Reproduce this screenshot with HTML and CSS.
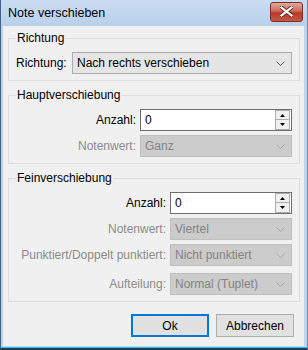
FILE: index.html
```html
<!DOCTYPE html>
<html lang="de">
<head>
    <meta charset="UTF-8">
    <title>Note verschieben</title>
    <link rel="stylesheet" href="styles.css">
</head>
<body>
    <div class="window">
        <div class="titlebar">
            <span class="title">Note verschieben</span>
            <div class="close">
                <svg width="13" height="11" viewBox="0 0 13 11">
                    <path d="M1.5 1.5 L11.5 9.5 M11.5 1.5 L1.5 9.5" stroke="#5a2a24" stroke-width="4" stroke-linecap="square"/>
                    <path d="M1.5 1.5 L11.5 9.5 M11.5 1.5 L1.5 9.5" stroke="#ffffff" stroke-width="2.2" stroke-linecap="square"/>
                </svg>
            </div>
        </div>

        <div class="client">
            <fieldset class="group group-dir">
                <legend>Richtung</legend>
                <div class="row">
                    <label>Richtung:</label>
                    <div class="combo">
                        <span>Nach rechts verschieben</span>
                        <svg class="chevron" width="9" height="5" viewBox="0 0 9 5"><polyline points="0.5,0.5 4.5,4.5 8.5,0.5" fill="none" stroke="#606060"/></svg>
                    </div>
                </div>
            </fieldset>

            <fieldset class="group group-main">
                <legend>Hauptverschiebung</legend>
                <div class="form">
                    <label>Anzahl:</label>
                    <div class="spin">
                        <span>0</span>
                        <div class="spin-buttons">
                            <div class="spin-btn"><svg width="5" height="3" viewBox="0 0 5 3"><polygon points="2.5,0 5,3 0,3" fill="#000"/></svg></div>
                            <div class="spin-btn"><svg width="5" height="3" viewBox="0 0 5 3"><polygon points="0,0 5,0 2.5,3" fill="#000"/></svg></div>
                        </div>
                    </div>

                    <label class="disabled">Notenwert:</label>
                    <div class="combo off">
                        <span>Ganz</span>
                        <svg class="chevron" width="9" height="5" viewBox="0 0 9 5"><polyline points="0.5,0.5 4.5,4.5 8.5,0.5" fill="none" stroke="#a8a8a8"/></svg>
                    </div>
                </div>
            </fieldset>

            <fieldset class="group group-fine">
                <legend>Feinverschiebung</legend>
                <div class="form">
                    <label>Anzahl:</label>
                    <div class="spin">
                        <span>0</span>
                        <div class="spin-buttons">
                            <div class="spin-btn"><svg width="5" height="3" viewBox="0 0 5 3"><polygon points="2.5,0 5,3 0,3" fill="#000"/></svg></div>
                            <div class="spin-btn"><svg width="5" height="3" viewBox="0 0 5 3"><polygon points="0,0 5,0 2.5,3" fill="#000"/></svg></div>
                        </div>
                    </div>

                    <label class="disabled">Notenwert:</label>
                    <div class="combo off">
                        <span>Viertel</span>
                        <svg class="chevron" width="9" height="5" viewBox="0 0 9 5"><polyline points="0.5,0.5 4.5,4.5 8.5,0.5" fill="none" stroke="#a8a8a8"/></svg>
                    </div>

                    <label class="disabled">Punktiert/Doppelt punktiert:</label>
                    <div class="combo off">
                        <span>Nicht punktiert</span>
                        <svg class="chevron" width="9" height="5" viewBox="0 0 9 5"><polyline points="0.5,0.5 4.5,4.5 8.5,0.5" fill="none" stroke="#a8a8a8"/></svg>
                    </div>

                    <label class="disabled last">Aufteilung:</label>
                    <div class="combo off last">
                        <span>Normal (Tuplet)</span>
                        <svg class="chevron" width="9" height="5" viewBox="0 0 9 5"><polyline points="0.5,0.5 4.5,4.5 8.5,0.5" fill="none" stroke="#a8a8a8"/></svg>
                    </div>
                </div>
            </fieldset>

            <div class="buttons">
                <button class="btn default">Ok</button>
                <button class="btn">Abbrechen</button>
            </div>
        </div>
    </div>
</body>
</html>
```

FILE: styles.css
```css
body {
    margin: 0;
    font-family: "Liberation Sans", Arial, sans-serif;
    font-size: 12px;
    color: #000;
}
.window {
    width: 308px;
    height: 350px;
    box-sizing: border-box;
    display: flex;
    flex-direction: column;
    background-color: #c0d5ec;
    border-left: 1px solid #3f6388;
    border-right: 1px solid #6d8db0;
    border-bottom: 2px solid #1f3d5e;
    box-shadow: inset 0 -1px 0 #33c3f2;
    padding: 0 3px 2px 2px;
}
.titlebar {
    height: 26px;
    display: flex;
    align-items: center;
    justify-content: space-between;
    background: linear-gradient(#c9dcf1, #b9d0ea);
    margin: 0 -3px 0 -2px;
    padding-right: 4px;
    padding-left: 7px;
}
.title {
    line-height: 15px;
    font-size: 12.5px;
}
.close {
    width: 31px;
    height: 18px;
    margin-top: -3px;
    border: 1px solid #7a2f28;
    border-radius: 3px;
    background: linear-gradient(#e4a89e, #cd6a5c 45%, #b73a2b 55%, #c8553f);
    display: flex;
    align-items: center;
    justify-content: center;
}
.client {
    flex: 1;
    background-color: #f0f0f0;
    display: flex;
    flex-direction: column;
}
.group {
    border: 1px solid #dcdcdc;
    margin: 5px 4px 0 5px;
    padding: 6px 7px 6px 7px;
    min-width: 0;
}
.group legend {
    padding: 0 1px;
    line-height: 15px;
}
.group-main, .group-fine {
    margin-top: 7px;
}
.row {
    display: grid;
    grid-template-columns: 1fr 220px;
    align-items: center;
}
.form {
    display: grid;
    row-gap: 4px;
    column-gap: 4px;
    align-items: center;
}
.group-main .form {
    grid-template-columns: 1fr 152px;
}
.group-fine .form {
    grid-template-columns: 1fr 122px;
}
.form label {
    text-align: right;
    white-space: nowrap;
}
.form .last {
    margin-top: 3px;
}
.disabled {
    color: #8b8b8b;
}
.combo {
    height: 22px;
    box-sizing: border-box;
    border: 1px solid #adadad;
    background-color: #e5e5e5;
    display: flex;
    align-items: center;
    justify-content: space-between;
    padding: 0 6px 0 4px;
}
.combo.off {
    background-color: #cccccc;
    border-color: #bfbfbf;
    color: #838383;
}
.spin {
    height: 22px;
    box-sizing: border-box;
    border: 1px solid #6e6e6e;
    background-color: #fff;
    display: flex;
    align-items: center;
    justify-content: space-between;
    padding: 0 1px 0 4px;
}
.spin-buttons {
    display: flex;
    flex-direction: column;
}
.spin-btn {
    width: 13px;
    height: 8px;
    border: 1px solid #adadad;
    background-color: #f0f0f0;
    display: flex;
    align-items: center;
    justify-content: center;
}
.spin-btn + .spin-btn {
    border-top: none;
    height: 9px;
}
.buttons {
    display: flex;
    justify-content: flex-end;
    gap: 7px;
    margin: 12px 10px 0 0;
}
.btn {
    width: 78px;
    height: 23px;
    box-sizing: border-box;
    border: 1px solid #adadad;
    background-color: #e1e1e1;
    font-family: inherit;
    font-size: 12px;
    color: #000;
    padding: 0;
}
.btn.default {
    border: 2px solid #0078d7;
}
```
